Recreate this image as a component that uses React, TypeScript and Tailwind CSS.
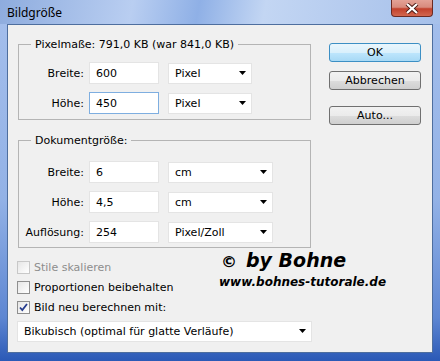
import React from "react";

const ui = "font-['DejaVu_Sans',sans-serif] text-[11px] leading-[13px] text-black";

const Arrow = () => (
  <svg width="8" height="5" viewBox="0 0 8 5" className="shrink-0">
    <path d="M0 0h7L3.5 4z" fill="#000" />
  </svg>
);

const Field = ({ value, focused }: { value: string; focused?: boolean }) => (
  <div
    className={
      "flex h-[22px] w-[70px] items-center border bg-white pl-[6px] " +
      (focused ? "border-[#7eaee0]" : "border-[#e4e4e4]")
    }
  >
    {value}
  </div>
);

const Select = ({ value, width }: { value: string; width: string }) => (
  <div className={"flex h-[21px] items-center justify-between border border-[#e4e4e4] bg-white pl-[6px] pr-[4px] " + width}>
    <span>{value}</span>
    <Arrow />
  </div>
);

const Row = ({
  label,
  value,
  unit,
  selWidth,
  focused,
}: {
  label: string;
  value: string;
  unit: string;
  selWidth: string;
  focused?: boolean;
}) => (
  <div className="flex items-center">
    <div className="w-[65px] text-right">{label}</div>
    <div className="ml-[5px]">
      <Field value={value} focused={focused} />
    </div>
    <div className="ml-[9px]">
      <Select value={unit} width={selWidth} />
    </div>
  </div>
);

const Group = ({ title, children, h }: { title: string; children: React.ReactNode; h: string }) => (
  <div className={"relative ml-[1px] w-[293px] border border-[#b4b4b4] " + h}>
    <span className="absolute -top-[7px] left-[12px] bg-[#f0f0f0] px-[4px]">{title}</span>
    {children}
  </div>
);

const Check = ({ label, checked, disabled }: { label: string; checked?: boolean; disabled?: boolean }) => (
  <div className="flex h-[20px] items-center">
    <div
      className={
        "flex h-[13px] w-[13px] items-center justify-center border bg-[linear-gradient(135deg,#e6e6e6,#ffffff)] " +
        (disabled ? "border-[#c8c8c8]" : "border-[#8f8f8f]")
      }
    >
      {checked && (
        <svg width="9" height="9" viewBox="0 0 9 9">
          <path d="M1 4.5l2.3 2.6L8 1" fill="none" stroke="#263c8e" strokeWidth="1.8" />
        </svg>
      )}
    </div>
    <span className={"ml-[4px] " + (disabled ? "text-[#8d8d8d]" : "")}>{label}</span>
  </div>
);

const Button = ({ label, primary }: { label: string; primary?: boolean }) => (
  <div
    className={
      "flex h-[19px] w-[92px] items-center justify-center rounded-[3px] border " +
      (primary
        ? "border-[#3c8fc4] bg-[linear-gradient(#eaf6fd_0%,#d9f0fc_50%,#bee6fd_51%,#a7d9f5_100%)]"
        : "border-[#707070] bg-[linear-gradient(#f2f2f2_0%,#ebebeb_50%,#dddddd_51%,#cfcfcf_100%)]")
    }
  >
    {label}
  </div>
);

export default function App() {
  return (
    <div className="h-[361px] w-[440px] overflow-hidden bg-[linear-gradient(180deg,#a5bfec_0%,#93b2e6_55%,#5d86d2_88%,#2b59b6_100%)] px-[7px] pb-[8px]">
      <div className="flex h-[24px] items-start justify-between bg-[linear-gradient(100deg,#8eacde_0%,#b9cef1_30%,#8fb0e6_45%,#c3d6f3_60%,#a6c0ea_100%)] -mx-[7px] px-[7px]">
        <span className="mt-[6px] font-['Noto_Sans',sans-serif] text-[12px] leading-[14px] text-black">Bildgröße</span>
        <div className="flex h-[17px] w-[42px] items-center justify-center rounded-b-[4px] border border-t-0 border-[#6b2a22] bg-[linear-gradient(#e3a296_0%,#d88b7d_45%,#c2412c_55%,#d2674f_100%)]">
          <svg width="14" height="11" viewBox="0 0 14 11">
            <path d="M2 1l5 4.5L12 1M2 10l5-4.5L12 10" fill="none" stroke="#4a1a14" strokeWidth="4" />
            <path d="M2 1l5 4.5L12 1M2 10l5-4.5L12 10" fill="none" stroke="#ffffff" strokeWidth="2.2" />
          </svg>
        </div>
      </div>
      <div className={"relative flex h-[329px] border border-[#4e6e9e] bg-[#f0f0f0] " + ui}>
        <div className="flex w-[304px] flex-col pl-[9px] pt-[19px]">
          <Group title="Pixelmaße: 791,0 KB (war 841,0 KB)" h="h-[76px]">
            <div className="flex flex-col gap-[8px] pt-[17px]">
              <Row label="Breite:" value="600" unit="Pixel" selWidth="w-[84px]" />
              <Row label="Höhe:" value="450" unit="Pixel" selWidth="w-[84px]" focused />
            </div>
          </Group>
          <div className="mt-[20px]">
            <Group title="Dokumentgröße:" h="h-[108px]">
              <div className="flex flex-col gap-[8px] pt-[20px]">
                <Row label="Breite:" value="6" unit="cm" selWidth="w-[105px]" />
                <Row label="Höhe:" value="4,5" unit="cm" selWidth="w-[105px]" />
                <Row label="Auflösung:" value="254" unit="Pixel/Zoll" selWidth="w-[105px]" />
              </div>
            </Group>
          </div>
          <div className="mt-[9px] flex flex-col">
            <Check label="Stile skalieren" disabled />
            <Check label="Proportionen beibehalten" />
            <Check label="Bild neu berechnen mit:" checked />
          </div>
          <div className="mt-[4px]">
            <Select value="Bikubisch (optimal für glatte Verläufe)" width="w-[295px]" />
          </div>
        </div>
        <div className="ml-[17px] flex flex-col pt-[18px]">
          <Button label="OK" primary />
          <div className="mt-[9px]">
            <Button label="Abbrechen" />
          </div>
          <div className="mt-[16px]">
            <Button label="Auto..." />
          </div>
        </div>
        <div className="absolute left-[213px] top-[223px] flex flex-col font-['DejaVu_Sans',sans-serif] italic font-bold text-black">
          <div className="flex items-baseline">
            <span className="text-[16px] leading-[18px]">©</span>
            <span className="ml-[9px] text-[19px] leading-[24px]">by Bohne</span>
          </div>
          <span className="-ml-[2px] mt-[3px] text-[12px] leading-[14px]">www.bohnes-tutorale.de</span>
        </div>
      </div>
    </div>
  );
}
